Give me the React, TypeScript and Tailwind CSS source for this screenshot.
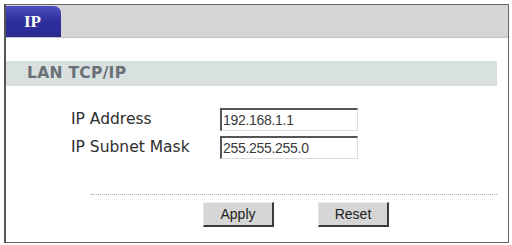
import React from 'react';

const labelFont = { fontFamily: '"DejaVu Sans", Verdana, sans-serif' };
const fieldFont = { fontFamily: '"Liberation Sans", Arial, sans-serif' };

const Field: React.FC<{ label: string; value: string }> = ({ label, value }) => (
  <div className="flex items-center h-[23px]">
    <div className="w-[149px] text-[15.5px] text-[#2e2e2e]" style={labelFont}>
      {label}
    </div>
    <div
      className="w-[138px] h-[23px] border-t-2 border-l-2 border-b border-r border-t-[#555] border-l-[#555] border-b-[#ddd] border-r-[#ddd] bg-white flex items-center pl-[1px] text-[14px] text-[#3a3a3a] tracking-[-0.3px]"
      style={fieldFont}
    >
      {value}
    </div>
  </div>
);

const Button: React.FC<{ label: string }> = ({ label }) => (
  <div
    className="w-[71px] h-[25px] bg-[#d6d6d6] border-t border-l border-t-[#eee] border-l-[#e6e6e6] border-b-2 border-r-2 border-b-[#3a3a3a] border-r-[#3a3a3a] flex items-center justify-center text-[14px] text-[#222]"
    style={fieldFont}
  >
    {label}
  </div>
);

export default function App() {
  return (
    <div className="w-[512px] h-[245px] bg-white pt-[4px] pl-[4px]">
      <div className="w-[505px] h-[239px] border border-[#666] border-l-2 border-l-[#555] flex flex-col">
        {/* tab bar */}
        <div className="h-[33px] bg-[#d5d5d5] border-b border-b-[#c4c4c4] flex items-end">
          <div className="w-[55px] h-[31px] rounded-tr-[7px] bg-gradient-to-b from-[#5050c0] via-[#2e2e9c] to-[#2a2a94] flex items-center pl-[18px]">
            <span
              className="text-white font-bold text-[17px] leading-none"
              style={{ fontFamily: '"Liberation Serif", "Times New Roman", serif' }}
            >
              IP
            </span>
          </div>
        </div>

        <div className="h-[23px]" />

        {/* section header */}
        <div className="h-[25px] mr-[11px] bg-[#d8e0e0] flex items-center pl-[21px]">
          <span className="text-[15.5px] font-bold text-[#6a7075] tracking-[0.3px]" style={labelFont}>
            LAN TCP/IP
          </span>
        </div>

        {/* fields */}
        <div className="pl-[65px] pt-[22px] flex flex-col gap-[5px]">
          <Field label="IP Address" value="192.168.1.1" />
          <Field label="IP Subnet Mask" value="255.255.255.0" />
        </div>

        {/* divider */}
        <div className="ml-[85px] mr-[11px] mt-[35px] border-t border-dotted border-t-[#aaa]" />

        {/* buttons */}
        <div className="pl-[197px] pt-[7px] flex gap-[44px]">
          <Button label="Apply" />
          <Button label="Reset" />
        </div>
      </div>
    </div>
  );
}
